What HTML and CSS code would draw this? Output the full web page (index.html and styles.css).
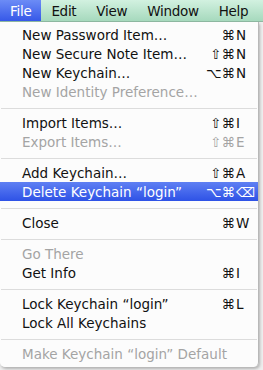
FILE: index.html
```html
<!DOCTYPE html>
<html lang="en">

<head>
    <meta charset="UTF-8">
    <title>File menu</title>
    <link rel="stylesheet" href="styles.css">
</head>

<body>
    <div class="menubar">
        <span class="title active">File</span>
        <span class="title">Edit</span>
        <span class="title">View</span>
        <span class="title">Window</span>
        <span class="title">Help</span>
    </div>
    <div class="menu">
        <div class="item"><span class="label">New Password Item…</span><span class="keys"><span class="mods">⌘</span><span class="key">N</span></span></div>
        <div class="item"><span class="label">New Secure Note Item…</span><span class="keys"><span class="mods">⇧⌘</span><span class="key">N</span></span></div>
        <div class="item"><span class="label">New Keychain…</span><span class="keys"><span class="mods">⌥⌘</span><span class="key">N</span></span></div>
        <div class="item disabled"><span class="label">New Identity Preference…</span></div>
        <div class="separator"></div>
        <div class="item"><span class="label">Import Items…</span><span class="keys"><span class="mods">⇧⌘</span><span class="key">I</span></span></div>
        <div class="item disabled"><span class="label">Export Items…</span><span class="keys"><span class="mods">⇧⌘</span><span class="key">E</span></span></div>
        <div class="separator"></div>
        <div class="item"><span class="label">Add Keychain…</span><span class="keys"><span class="mods">⇧⌘</span><span class="key">A</span></span></div>
        <div class="item selected"><span class="label">Delete Keychain “login”</span><span class="keys"><span class="mods">⌥⌘</span><span class="key">⌫</span></span></div>
        <div class="separator"></div>
        <div class="item"><span class="label">Close</span><span class="keys"><span class="mods">⌘</span><span class="key">W</span></span></div>
        <div class="separator"></div>
        <div class="item disabled"><span class="label">Go There</span></div>
        <div class="item"><span class="label">Get Info</span><span class="keys"><span class="mods">⌘</span><span class="key">I</span></span></div>
        <div class="separator"></div>
        <div class="item"><span class="label">Lock Keychain “login”</span><span class="keys"><span class="mods">⌘</span><span class="key">L</span></span></div>
        <div class="item"><span class="label">Lock All Keychains</span></div>
        <div class="separator"></div>
        <div class="item disabled"><span class="label">Make Keychain “login” Default</span></div>
    </div>
</body>

</html>
```

FILE: styles.css
```css
body {
    margin: 0;
    font-family: "DejaVu Sans", sans-serif;
    font-size: 13.5px;
    background: #eeeeee;
    width: 263px;
    height: 370px;
    overflow: hidden;
}

.menubar {
    display: flex;
    height: 22px;
    background: linear-gradient(#d2f1e0, #a6d9bd);
    border-bottom: 1px solid #8fb9a2;
    box-sizing: border-box;
}

.title {
    display: flex;
    align-items: center;
    padding: 0 10px;
    letter-spacing: -0.3px;
    color: #111;
}

.title.active {
    background: linear-gradient(#6c8cf6, #3658e8);
    color: white;
}

.menu {
    width: 259px;
    padding: 3px 0 4px;
    background: rgba(252, 252, 252, 0.97);
    border-right: 1px solid #b8b8b8;
    border-radius: 0 0 5px 5px;
    box-shadow: 1px 2px 3px rgba(0, 0, 0, 0.25);
    box-sizing: border-box;
}

.item {
    display: flex;
    align-items: center;
    height: 19px;
    padding-left: 22px;
    color: #111;
}

.item .label {
    flex: 1;
    white-space: nowrap;
}

.keys {
    display: flex;
}

.mods {
    text-align: right;
}

.key {
    width: 22px;
    padding-left: 1px;
}

.disabled {
    color: #a4a4a4;
}

.selected {
    background: linear-gradient(#5f80f3, #2e52e6);
    color: white;
}

.separator {
    height: 1px;
    margin: 7px 1px 4px;
    background: #dcdcdc;
}
```
